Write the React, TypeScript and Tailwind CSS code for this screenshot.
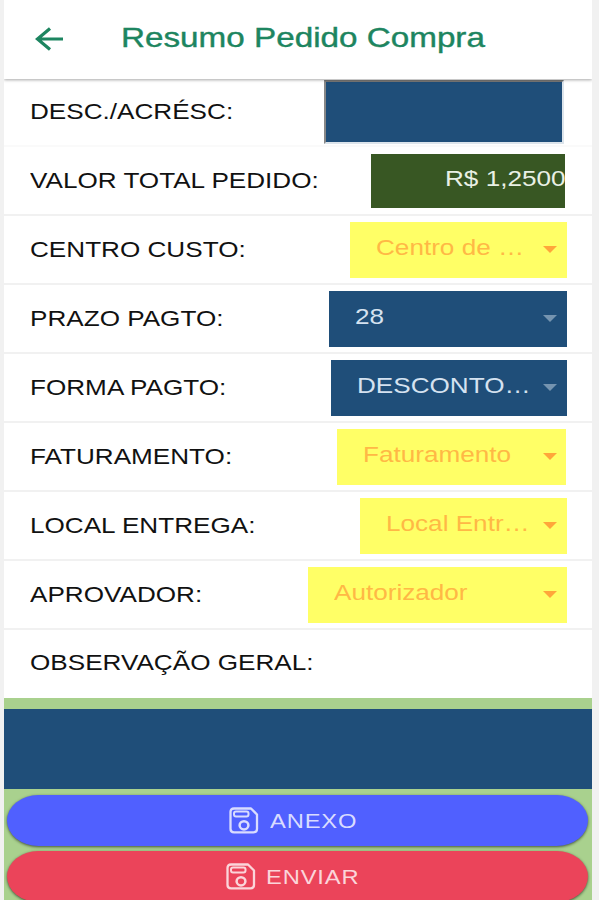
import type { ReactNode } from "react";
import clsx from "clsx";

function WideText({ children, className }: { children: ReactNode; className?: string }) {
  return (
    <span className={clsx("inline-block origin-left scale-x-[1.187] whitespace-nowrap", className)}>
      {children}
    </span>
  );
}

function FloppyIcon() {
  return (
    <svg className="h-[27px] w-[30px] shrink-0" viewBox="0 0 30 27" fill="none" stroke="currentColor" strokeWidth="2.3" strokeLinejoin="round">
      <path d="M5 1.5H22L28 7.5V22Q28 25.3 24.5 25.3H5Q1.5 25.3 1.5 22V4.8Q1.5 1.5 5 1.5Z" />
      <rect x="5" y="4.6" width="14.5" height="5" rx="2" strokeWidth="2" />
      <ellipse cx="15" cy="18.3" rx="4.4" ry="4.1" strokeWidth="2.5" />
    </svg>
  );
}

type Tone = "yellow" | "blue";

function Select({ text, tone, className }: { text: string; tone: Tone; className: string }) {
  return (
    <div
      className={clsx(
        "flex h-14 items-center justify-between pl-[26px]",
        tone === "yellow" ? "bg-[#ffff66] text-[#ffb845]" : "bg-[#1f4e79] text-[#d5e2f0]",
        className,
      )}
    >
      <WideText className="-mt-[3px]">{text}</WideText>
      <svg
        className={clsx("-mt-px h-[7px] w-[14px] shrink-0", tone === "yellow" ? "text-[#ffa63a]" : "text-[#7594b0]")}
        viewBox="0 0 14 7"
      >
        <path d="M0 0H14L7 7Z" fill="currentColor" />
      </svg>
    </div>
  );
}

function Row({ label, children, className }: { label: string; children?: ReactNode; className?: string }) {
  return (
    <div className={clsx("flex shrink-0 items-center justify-between border-b-2 pl-[25.5px]", className)}>
      <WideText className="text-[#111111]">{label}</WideText>
      {children}
    </div>
  );
}

const fields: { label: string; text: string; tone: Tone; box: string }[] = [
  { label: "CENTRO CUSTO:", text: "Centro de …", tone: "yellow", box: "mr-[25px] w-[217.5px] pr-[10px]" },
  { label: "PRAZO PAGTO:", text: "28", tone: "blue", box: "mr-[25.5px] w-[238px] pr-[9.5px]" },
  { label: "FORMA PAGTO:", text: "DESCONTO…", tone: "blue", box: "mr-[25.5px] w-[236px] pr-[9.5px]" },
  { label: "FATURAMENTO:", text: "Faturamento", tone: "yellow", box: "mr-[26.5px] w-[229px] pr-[8.5px]" },
  { label: "LOCAL ENTREGA:", text: "Local Entr…", tone: "yellow", box: "mr-[25px] w-[207.5px] pr-[10px]" },
  { label: "APROVADOR:", text: "Autorizador", tone: "yellow", box: "mr-[25.5px] w-[259px] pr-[9.5px]" },
];

export default function App() {
  return (
    <div className="flex h-[900px] w-[599px] overflow-hidden bg-[#f1f1f1] pr-[7px] pl-[4px] font-['Liberation_Sans',Arial,sans-serif] text-[22px] leading-[26px]">
      <main className="flex w-[588px] flex-col overflow-hidden bg-white">
        <header className="z-10 flex h-[79px] shrink-0 items-center bg-white pl-[31px] text-[#1d8560] shadow-[0_1px_3px_rgba(0,0,0,0.35)]">
          <svg className="-mt-px h-[24px] w-[29px] shrink-0" viewBox="0 0 29 24" fill="none" stroke="currentColor" strokeWidth="3.2">
            <path d="M28 12H3M15 1.5L2.5 12L15 22.5" />
          </svg>
          <WideText className="-mt-[3px] ml-[57px] text-[28px] leading-[32px] [-webkit-text-stroke:0.4px_currentColor]">
            Resumo Pedido Compra
          </WideText>
        </header>

        <Row label="DESC./ACRÉSC:" className="h-[68px] border-[#fafafa]">
          <div className="mr-[28px] h-[64px] w-[240px] border-2 border-t-[#777777] border-r-[#dce4eb] border-b-[#dce4eb] border-l-[#888888] bg-[#1f4e79]" />
        </Row>
        <Row label="VALOR TOTAL PEDIDO:" className="h-[69px] border-[#f1f1f1]">
          <div className="mr-[27px] flex h-[54px] w-[194px] items-center overflow-hidden bg-[#385723] pl-[74px] text-[#e9f0e5]">
            <WideText className="-mt-[3px]">R$ 1,2500</WideText>
          </div>
        </Row>

        {fields.map((field) => (
          <Row key={field.label} label={field.label} className="h-[69px] border-[#f1f1f1]">
            <Select text={field.text} tone={field.tone} className={field.box} />
          </Row>
        ))}

        <div className="flex h-[68px] shrink-0 items-center pl-[25.5px] text-[#111111]">
          <WideText className="-mt-[2px]">OBSERVAÇÃO GERAL:</WideText>
        </div>

        <footer className="flex flex-1 flex-col bg-[#a9d18e] pt-[11px]">
          <div className="h-[80px] shrink-0 bg-[#1f4e79]" />
          <div className="mt-[6px] flex flex-col gap-[5px] pr-[4px] pl-[3px] text-[20px] tracking-[0.7px]">
            <button className="flex h-[51px] items-center rounded-[32px/26px] bg-[#5060ff] pl-[222px] text-[#d9dcff] shadow-[0_1px_3px_rgba(0,0,0,0.6)]">
              <FloppyIcon />
              <WideText className="mt-px ml-[10.5px]">ANEXO</WideText>
            </button>
            <button className="flex h-[51px] items-center rounded-[32px/26px] bg-[#eb445a] pl-[219px] text-[#fbd5da] shadow-[0_1px_3px_rgba(0,0,0,0.6)]">
              <FloppyIcon />
              <WideText className="mt-px ml-[10px]">ENVIAR</WideText>
            </button>
          </div>
        </footer>
      </main>
    </div>
  );
}
